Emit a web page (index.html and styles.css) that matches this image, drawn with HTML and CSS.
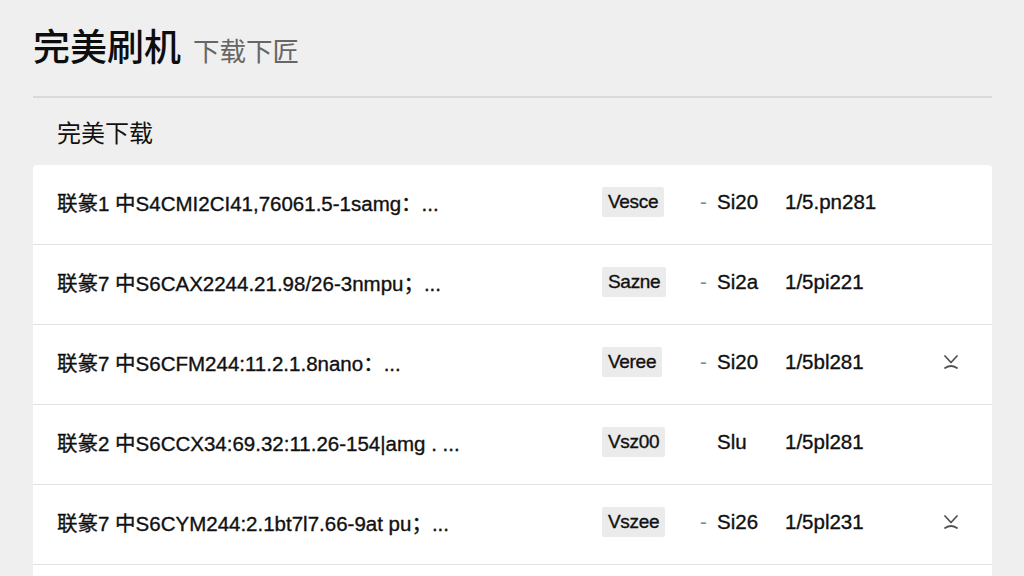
FILE: index.html
```html
<!DOCTYPE html>
<html lang="zh-CN">
  <head>
    <meta charset="utf-8" />
    <meta name="viewport" content="width=device-width, initial-scale=1.0" />
    <title>完美刷机</title>
    <link rel="stylesheet" href="styles.css">
  </head>
  <body>
    <div class="page">
      <header class="page-head">
        <h1>完美刷机</h1>
        <span class="subtitle">下载下匠</span>
      </header>

      <h2 class="section-title">完美下载</h2>

      <ul class="file-list">
        <li class="file-row">
          <span class="file-name">联篆1 中S4CMI2CI41,76061.5-1samg：...</span>
          <span class="file-tag">Vesce</span>
          <span class="file-size"><i>-</i>Si20</span>
          <span class="file-date">1/5.pn281</span>
          <span class="file-more"></span>
        </li>
        <li class="file-row">
          <span class="file-name">联篆7 中S6CAX2244.21.98/26-3nmpu；...</span>
          <span class="file-tag">Sazne</span>
          <span class="file-size"><i>-</i>Si2a</span>
          <span class="file-date">1/5pi221</span>
          <span class="file-more"></span>
        </li>
        <li class="file-row">
          <span class="file-name">联篆7 中S6CFM244:11.2.1.8nano：...</span>
          <span class="file-tag">Veree</span>
          <span class="file-size"><i>-</i>Si20</span>
          <span class="file-date">1/5bl281</span>
          <span class="file-more">
            <svg width="18" height="18" viewBox="0 0 18 18"><path d="M3 3 L9 9.5 L15 3"/><path d="M3 15 Q9 11 15 15"/></svg>
          </span>
        </li>
        <li class="file-row">
          <span class="file-name">联篆2 中S6CCX34:69.32:11.26-154|amg . ...</span>
          <span class="file-tag">Vsz00</span>
          <span class="file-size"><i></i>Slu</span>
          <span class="file-date">1/5pl281</span>
          <span class="file-more"></span>
        </li>
        <li class="file-row">
          <span class="file-name">联篆7 中S6CYM244:2.1bt7l7.66-9at pu；...</span>
          <span class="file-tag">Vszee</span>
          <span class="file-size"><i>-</i>Si26</span>
          <span class="file-date">1/5pl231</span>
          <span class="file-more">
            <svg width="18" height="18" viewBox="0 0 18 18"><path d="M3 3 L9 9.5 L15 3"/><path d="M3 15 Q9 11 15 15"/></svg>
          </span>
        </li>
        <li class="file-row">
          <span class="file-name">&nbsp;</span>
        </li>
      </ul>
    </div>
  </body>
</html>
```

FILE: styles.css
```css
body {
  margin: 0;
  background-color: #efefef;
  font-family: "Liberation Sans", "Noto Sans CJK SC", sans-serif;
  color: #111;
  overflow: hidden;
}

.page {
  padding: 0 32px 0 33px;
}

.page-head {
  display: flex;
  align-items: baseline;
  gap: 12px;
  height: 98px;
  border-bottom: 2px solid #d9d9d9;
  box-sizing: border-box;
  padding-top: 18px;
}

h1 {
  margin: 0;
  font-family: "Noto Sans CJK SC", sans-serif;
  font-size: 37px;
  font-weight: 500;
  color: #0d0d0d;
}

.subtitle {
  font-family: "Noto Sans CJK SC", sans-serif;
  font-size: 26.5px;
  color: #666;
}

.section-title {
  margin: 0;
  height: 67px;
  line-height: 67px;
  padding-left: 24px;
  font-family: "Noto Sans CJK SC", sans-serif;
  font-size: 24px;
  font-weight: 400;
  color: #111;
}

.file-list {
  list-style: none;
  margin: 0;
  padding: 0;
  background-color: #fff;
  border-radius: 4px 4px 0 0;
}

.file-row {
  display: grid;
  grid-template-columns: 545px 98px 85px 1fr 18px;
  align-items: center;
  box-sizing: border-box;
  height: 80px;
  padding: 0 32px 5px 24px;
  border-bottom: 1px solid #e2e2e2;
  font-size: 20.5px;
  -webkit-text-stroke: 0.35px #111;
}

.file-name {
  white-space: nowrap;
}

.file-tag {
  justify-self: start;
  padding: 4px 6px;
  background-color: #ebebeb;
  border-radius: 2px;
  font-size: 19px;
  letter-spacing: -0.3px;
}

.file-size i {
  display: inline-block;
  width: 17px;
  font-style: normal;
  color: #888;
  -webkit-text-stroke: 0;
}

.file-more svg {
  display: block;
  fill: none;
  stroke: #555;
  stroke-width: 1.8;
  stroke-linecap: round;
  stroke-linejoin: round;
}
```
